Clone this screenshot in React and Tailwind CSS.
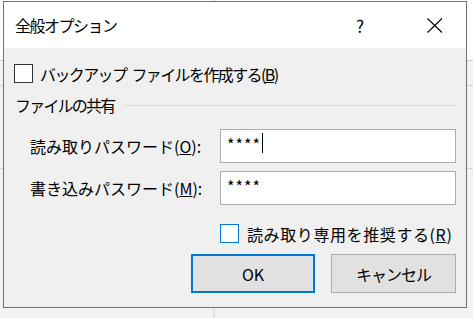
import React from "react";

function Check({ blue }) {
  return (
    <div
      className={
        "w-[19px] h-[19px] bg-white shrink-0 border " +
        (blue ? "border-[#0078d7]" : "border-[#333333]")
      }
    />
  );
}

export default function App() {
  return (
    <div
      className="relative w-[473px] h-[318px] overflow-hidden bg-[#f3f3f3] text-black"
      style={{ fontFamily: '"Noto Sans CJK JP", "Noto Sans", sans-serif' }}
    >
      {/* backdrop */}
      <div className="absolute left-0 top-0 w-full h-[60px] bg-white" />
      <div className="absolute left-0 top-[60px] w-full h-px bg-[#c8c8c8]" />
      <div className="absolute left-0 top-[85px] w-full h-px bg-[#d4d4d4]" />
      <div className="absolute left-0 top-[168px] w-full h-px bg-[#d4d4d4]" />
      <div className="absolute left-[213px] top-0 w-[2px] h-full bg-[#e2e2e2]" />

      {/* dialog */}
      <div className="absolute left-[3px] top-[1px] w-[464px] h-[307px] border border-[#717171] bg-[#f0f0f0] flex flex-col">
        {/* title bar */}
        <div className="h-[46px] bg-white flex items-center shrink-0">
          <span className="pl-[11px] text-[16px] leading-none tracking-[-1.5px]">
            全般オプション
          </span>
          <span className="ml-auto mr-[63px] text-[17px] leading-none">?</span>
          <svg
            width="16"
            height="15"
            viewBox="0 0 16 15"
            className="mr-[23px]"
          >
            <path d="M0.5 0.5 L15 14.5 M15 0.5 L0.5 14.5" stroke="#000" strokeWidth="1.1" fill="none" />
          </svg>
        </div>

        {/* body */}
        <div className="flex flex-col">
          <div className="mt-[16px] pl-[10px] flex items-center h-[19px]">
            <Check />
            <span className="ml-[7px] text-[16px] leading-none tracking-[-1.6px] flex items-center">
              <span>バックアップ</span>
              <span className="inline-block w-[5px]" />
              <span>ファイルを作成する(<span className="underline">B</span>)</span>
            </span>
          </div>

          <div className="mt-[11px] h-[22px] pl-[11px] pr-[10px] flex items-center">
            <span className="text-[16px] leading-none tracking-[-1.8px]">ファイルの共有</span>
            <div className="flex-1 h-px bg-[#dcdcdc] ml-[9px]" />
          </div>

          <div className="mt-[13px] pl-[26px] pr-[10px] flex items-center justify-between">
            <span className="text-[16px] leading-none">
              読み取りパスワード(<span className="underline">O</span>):
            </span>
            <div className="w-[236px] h-[34px] bg-white border border-[#adadad] flex items-start pl-[6px] pt-[4px]">
              <span className="text-[16px] leading-[20px] tracking-[1px]">****</span>
              <div className="w-px h-[20px] bg-black ml-[1px] -mt-[1px]" />
            </div>
          </div>

          <div className="mt-[8px] pl-[26px] pr-[10px] flex items-center justify-between">
            <span className="text-[16px] leading-none">
              書き込みパスワード(<span className="underline">M</span>):
            </span>
            <div className="w-[236px] h-[34px] bg-white border border-[#adadad] flex items-start pl-[6px] pt-[4px]">
              <span className="text-[16px] leading-[20px] tracking-[1px]">****</span>
            </div>
          </div>

          <div className="mt-[19px] pl-[216px] flex items-center h-[19px]">
            <Check blue />
            <span className="ml-[8px] text-[16px] leading-none tracking-[0.6px]">
              読み取り専用を推奨する(<span className="underline">R</span>)
            </span>
          </div>

          <div className="mt-[11px] pr-[10px] flex justify-end gap-[16px]">
            <div className="w-[124px] h-[39px] bg-[#e1e1e1] border-2 border-[#0078d7] flex items-center justify-center text-[16px] leading-none">
              OK
            </div>
            <div className="w-[125px] h-[39px] bg-[#e1e1e1] border border-[#adadad] flex items-center justify-center text-[16px] leading-none tracking-[-1px]">
              キャンセル
            </div>
          </div>
        </div>
      </div>
    </div>
  );
}
